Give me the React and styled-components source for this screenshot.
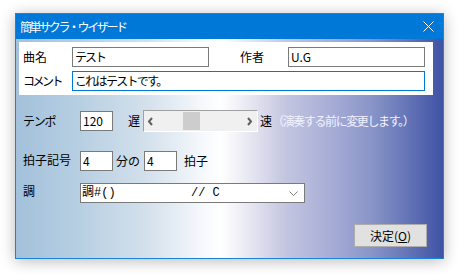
import React from 'react'
import styled, { createGlobalStyle } from 'styled-components'

const Global = createGlobalStyle`
  html, body { margin: 0; padding: 0; background: #fff; }
  body {
    font-family: "Noto Sans CJK JP", "Liberation Sans", sans-serif;
    font-size: 12px;
    color: #000;
  }
`

const Page = styled.div`
  padding: 13px 0 0 15px;
  width: 458px;
  height: 274px;
  box-sizing: border-box;
`

const Window = styled.div`
  width: 429px;
  box-sizing: border-box;
  border: 1px solid #1883d7;
  box-shadow: 0 2px 14px rgba(0, 0, 0, 0.28);
  display: flex;
  flex-direction: column;
`

const TitleBar = styled.div`
  height: 25px;
  background: #0078d7;
  color: #fff;
  display: flex;
  align-items: center;
  justify-content: space-between;
  padding: 0 9px 0 4px;
  line-height: 1;
`

const Title = styled.span`
  font-size: 12px;
  letter-spacing: -2.4px;
`

const Client = styled.div`
  height: 219px;
  box-sizing: border-box;
  padding: 3px 10px 0 3px;
  background: linear-gradient(
    90deg,
    #a3c1db 0%,
    #b6cee2 14%,
    #d4e1ec 31%,
    #f4f7fb 43%,
    #ffffff 48%,
    #e6e6f2 55%,
    #c4c6e0 63%,
    #a6acd6 74%,
    #8a96c8 83%,
    #6777b8 91%,
    #4052a4 100%
  );
  display: flex;
  flex-direction: column;
`

const InfoPanel = styled.div`
  background: #fff;
  height: 53px;
  box-sizing: border-box;
  padding: 5px 0 0 4px;
  display: grid;
  grid-template-columns: 49px 137px 31px 48px 137px;
  grid-template-rows: 20px 20px;
  row-gap: 4px;
  align-items: center;
`

const Label = styled.span`
  line-height: 1;
  white-space: nowrap;
  letter-spacing: ${p => p.$ls || 0}px;
  color: ${p => p.$light ? '#f2f2ff' : '#000'};
`

const TextBox = styled.div`
  box-sizing: border-box;
  height: 20px;
  width: ${p => p.$w ? p.$w + 'px' : 'auto'};
  grid-column: ${p => p.$col || 'auto'};
  background: #fff;
  border: 1px solid ${p => p.$focus ? '#0078d7' : '#7a7a7a'};
  padding: 0 2px;
  display: flex;
  align-items: center;
  line-height: 1;
  white-space: nowrap;
  letter-spacing: ${p => p.$ls || 0}px;
`

const Rows = styled.div`
  padding: 15px 0 0 4px;
  display: flex;
  flex-direction: column;
`

const Row = styled.div`
  display: flex;
  align-items: ${p => p.$align || 'center'};
  height: ${p => p.$h}px;
  margin-bottom: ${p => p.$mb || 0}px;
`

const RowLabel = styled.span`
  width: 57px;
  line-height: 1;
  flex: none;
  white-space: nowrap;
  margin-top: ${p => p.$mt || 0}px;
  letter-spacing: ${p => p.$ls || 0}px;
`

const Gap = styled.span`
  width: ${p => p.$w}px;
  flex: none;
`

const ScrollBar = styled.div`
  width: 115px;
  height: 22px;
  box-sizing: border-box;
  background: #f0f0f0;
  border-top: 1px solid #a0a0a0;
  border-left: 1px solid #a0a0a0;
  border-right: 1px solid #fff;
  border-bottom: 1px solid #fff;
  display: flex;
  align-items: center;
  justify-content: space-between;
  padding: 0 4px 0 3px;
  position: relative;
`

const Thumb = styled.div`
  position: absolute;
  left: 39px;
  top: 1px;
  width: 17px;
  height: 18px;
  background: #cdcdcd;
`

const Select = styled.div`
  width: 225px;
  height: 20px;
  box-sizing: border-box;
  background: #fff;
  border: 1px solid #7a7a7a;
  display: flex;
  align-items: center;
  padding: 0 6px 0 1px;
  line-height: 1;
  white-space: nowrap;
`

const SelectPart = styled.span`
  width: ${p => p.$w ? p.$w + 'px' : 'auto'};
  flex: ${p => p.$w ? 'none' : '1'};
  font-family: "Liberation Mono", "Noto Sans CJK JP", monospace;
`

const ButtonRow = styled.div`
  display: flex;
  justify-content: flex-end;
  padding-right: 6px;
`

const Button = styled.button`
  width: 73px;
  height: 23px;
  box-sizing: border-box;
  background: #e1e1e1;
  border: 1px solid #adadad;
  font: inherit;
  font-size: 12px;
  color: #000;
  padding: 0;
  line-height: 1;
  u { text-decoration: underline; }
`

const Chevron = ({ dir }) => (
  <svg width="7" height="9" viewBox="0 0 7 9">
    <path
      d={dir === 'left' ? 'M5 1 L2 4.5 L5 8' : 'M2 1 L5 4.5 L2 8'}
      fill="none"
      stroke="#606060"
      strokeWidth="2"
    />
  </svg>
)

export default function App() {
  return (
    <Page>
      <Global />
      <Window>
        <TitleBar>
          <Title>簡単サクラ・ウイザード</Title>
          <svg width="11" height="11" viewBox="0 0 11 11">
            <path d="M0.5 0.5 L10.5 10.5 M10.5 0.5 L0.5 10.5" stroke="#fff" strokeWidth="1" />
          </svg>
        </TitleBar>
        <Client>
          <InfoPanel>
            <Label>曲名</Label>
            <TextBox $ls={-2}>テスト</TextBox>
            <span />
            <Label>作者</Label>
            <TextBox>U.G</TextBox>
            <Label $ls={-2.5}>コメント</Label>
            <TextBox $col="2 / 6" $focus $ls={-1.7}>これはテストです。</TextBox>
          </InfoPanel>
          <Rows>
            <Row $h={22} $mb={19}>
              <RowLabel $ls={-1.3}>テンポ</RowLabel>
              <TextBox $w={33}>120</TextBox>
              <Gap $w={15} />
              <Label>遅</Label>
              <Gap $w={3} />
              <ScrollBar>
                <Chevron dir="left" />
                <Thumb />
                <Chevron dir="right" />
              </ScrollBar>
              <Gap $w={2} />
              <Label>速</Label>
              <Label $light $ls={-1.4}>（演奏する前に変更します。）</Label>
            </Row>
            <Row $h={20} $mb={12}>
              <RowLabel $mt={-2}>拍子記号</RowLabel>
              <TextBox $w={33}>4</TextBox>
              <Gap $w={3} />
              <Label>分の</Label>
              <Gap $w={4} />
              <TextBox $w={33}>4</TextBox>
              <Gap $w={7} />
              <Label>拍子</Label>
            </Row>
            <Row $h={20} $mb={21} $align="flex-start">
              <RowLabel $mt={2}>調</RowLabel>
              <Select>
                <SelectPart $w={109}>調#()</SelectPart>
                <SelectPart>// C</SelectPart>
                <svg width="9" height="5" viewBox="0 0 9 5">
                  <path d="M0.5 0.5 L4.5 4.5 L8.5 0.5" fill="none" stroke="#808080" strokeWidth="1" />
                </svg>
              </Select>
            </Row>
            <ButtonRow>
              <Button>決定(<u>O</u>)</Button>
            </ButtonRow>
          </Rows>
        </Client>
      </Window>
    </Page>
  )
}
